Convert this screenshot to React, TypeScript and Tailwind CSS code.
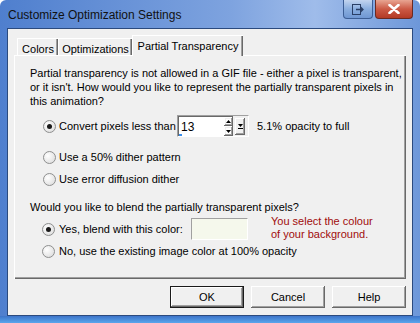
import React from "react";

// classic win32 bevels
const raised =
  "shadow-[inset_-1px_-1px_#696969,inset_1px_1px_#ffffff,inset_-2px_-2px_#a0a0a0,inset_2px_2px_#f0f0f0]";

function Radio({ checked }: { checked?: boolean }) {
  return (
    <div className="flex h-[13px] w-[13px] shrink-0 items-center justify-center rounded-full border border-[#8e8f8f] bg-[radial-gradient(circle_at_35%_35%,#ffffff,#d8d8d8)]">
      {checked && <div className="h-[5px] w-[5px] rounded-full bg-[#1a1a1a]" />}
    </div>
  );
}

function Tab({ label, width, active }: { label: string; width: string; active?: boolean }) {
  if (active) {
    return (
      <div className={"relative z-10 -mb-px flex h-[21px] items-start justify-center border-l border-t border-white bg-[#f0f0f0] pt-[2px] shadow-[inset_-1px_0_#696969,inset_-2px_0_#a0a0a0] " + width}>
        {label}
      </div>
    );
  }
  return (
    <div className={"mt-[3px] flex h-[17px] items-start justify-center border-l border-t border-white bg-[#f0f0f0] pt-[2px] shadow-[inset_-1px_0_#696969,inset_-2px_0_#a0a0a0] " + width}>
      {label}
    </div>
  );
}

function DialogButton({ label, isDefault }: { label: string; isDefault?: boolean }) {
  return (
    <div
      className={
        "flex h-[22px] w-[74px] items-center justify-center bg-[#f0f0f0] " +
        (isDefault
          ? "border border-[#1a1a1a] shadow-[inset_-1px_-1px_#696969,inset_1px_1px_#ffffff,inset_-2px_-2px_#a0a0a0]"
          : raised)
      }
    >
      {label}
    </div>
  );
}

function SpinBox() {
  return (
    <div className="flex h-[22px] w-[72px] items-center border-l border-t border-[#a0a0a0] border-b border-r border-b-white border-r-white bg-[#f0f0f0]">
      <div className="relative flex h-[20px] w-[46px] items-center border-l border-t border-[#696969] bg-white pl-[2px] text-[12px]">
        13
        <div className="absolute bottom-0 left-0 h-[2px] w-[3px] bg-[#3b8eea]" />
      </div>
      <div className="flex h-[20px] w-[9px] flex-col border-t border-[#696969] bg-white">
        <div className={"flex h-[9px] items-center justify-center " + raised}>
          <svg width="5" height="3" viewBox="0 0 5 3">
            <path d="M2.5 0L5 3H0z" fill="#000" />
          </svg>
        </div>
        <div className={"flex h-[10px] items-center justify-center " + raised}>
          <svg width="5" height="3" viewBox="0 0 5 3">
            <path d="M0 0h5L2.5 3z" fill="#000" />
          </svg>
        </div>
      </div>
      <div className={"ml-[2px] flex h-[17px] w-[10px] flex-col items-center justify-center gap-[1px] " + raised}>
        <svg width="5" height="3" viewBox="0 0 5 3">
          <path d="M0 0h5L2.5 3z" fill="#000" />
        </svg>
        <div className="h-px w-[5px] bg-black" />
      </div>
    </div>
  );
}

export default function App() {
  return (
    <div className="flex h-[323px] w-[420px] flex-col overflow-hidden rounded-t-[6px] bg-[linear-gradient(90deg,#4f7fce,#7ea3df_55%,#9fbcea_75%,#6d97d9)] font-['Liberation_Sans',Arial,sans-serif] text-[11px] text-black">
      {/* Title bar */}
      <div className="flex h-[28px] shrink-0 items-start">
        <div className="pl-[8px] pt-[6px] text-[12px] text-[#111]">Customize Optimization Settings</div>
        <div className="ml-auto mr-[7px] flex">
          <div className="flex h-[19px] w-[30px] items-center justify-center rounded-b-[4px] border border-t-0 border-[#3c5e95] bg-[linear-gradient(180deg,#c2d4ef,#8aaedf_50%,#6f97d3)]">
            <svg width="12" height="11" viewBox="0 0 12 11">
              <rect x="0.5" y="0.5" width="8" height="10" fill="none" stroke="#2a3f66" />
              <path d="M4 5.5h7M8.5 3l2.5 2.5L8.5 8" fill="none" stroke="#2a3f66" strokeWidth="1.3" />
            </svg>
          </div>
          <div className="ml-[2px] flex h-[19px] w-[38px] items-center justify-center rounded-b-[4px] border border-t-0 border-[#6a2a22] bg-[linear-gradient(180deg,#e8a592,#cc5a45_50%,#b33a25)]">
            <svg width="12" height="10" viewBox="0 0 12 10">
              <path d="M1.5 1l9 8M10.5 1l-9 8" stroke="#fff" strokeWidth="2.6" strokeLinecap="round" />
            </svg>
          </div>
        </div>
      </div>

      {/* Client area */}
      <div className="mx-[7px] flex h-[288px] flex-col border border-[#2b4a7e] bg-[#f0f0f0] px-[6px] pt-[6px]">
        <div className="flex h-[20px] items-start pl-[3px]">
          <Tab label="Colors" width="w-[41px]" />
          <Tab label="Optimizations" width="w-[74px]" />
          <Tab label="Partial Transparency" width="w-[111px]" active />
        </div>

        <div className="flex h-[224px] flex-col border-l border-t border-white bg-[#f0f0f0] pl-[15px] pt-[10px] shadow-[inset_-1px_-1px_#696969,inset_-2px_-2px_#a0a0a0]">
          <div className="leading-[14px]">
            <div className="whitespace-nowrap">Partial transparency is not allowed in a GIF file - either a pixel is transparent,</div>
            <div className="whitespace-nowrap">or it isn't. How would you like to represent the partially transparent pixels in</div>
            <div className="whitespace-nowrap">this animation?</div>
          </div>

          <div className="mt-[7px] flex h-[22px] items-center pl-[13px]">
            <Radio checked />
            <div className="ml-[3px] w-[118px]">Convert pixels less than</div>
            <SpinBox />
            <div className="ml-[8px]">5.1% opacity to full</div>
          </div>

          <div className="mt-[12px] flex h-[16px] items-center pl-[13px]">
            <Radio />
            <div className="ml-[3px]">Use a 50% dither pattern</div>
          </div>

          <div className="mt-[6px] flex h-[16px] items-center pl-[13px]">
            <Radio />
            <div className="ml-[3px]">Use error diffusion dither</div>
          </div>

          <div className="mt-[13px] h-[14px] leading-[14px]">Would you like to blend the partially transparent pixels?</div>

          <div className="mt-[4px] flex h-[22px] items-start pl-[12px]">
            <div className="flex h-[22px] items-center">
              <Radio checked />
              <div className="ml-[4px] w-[132px]">Yes, blend with this color:</div>
            </div>
            <div className="h-[22px] w-[57px] border-l border-t border-[#a0a0a0] border-b border-r border-b-white border-r-white bg-[#f5f8ec]" />
            <div className="-mt-[3px] ml-[23px] text-[11px] leading-[13px] text-[#a00c0c]">
              <div>You select the colour</div>
              <div>of your background.</div>
            </div>
          </div>

          <div className="mt-[3px] flex h-[16px] items-center pl-[12px]">
            <Radio />
            <div className="ml-[4px]">No, use the existing image color at 100% opacity</div>
          </div>
        </div>

        <div className="mt-[7px] flex justify-end gap-[7px] pr-[0px]">
          <DialogButton label="OK" isDefault />
          <DialogButton label="Cancel" />
          <DialogButton label="Help" />
        </div>
      </div>
      <div className="flex-1 bg-[linear-gradient(180deg,#3d74c9,#5aa6ec)]" />
    </div>
  );
}
